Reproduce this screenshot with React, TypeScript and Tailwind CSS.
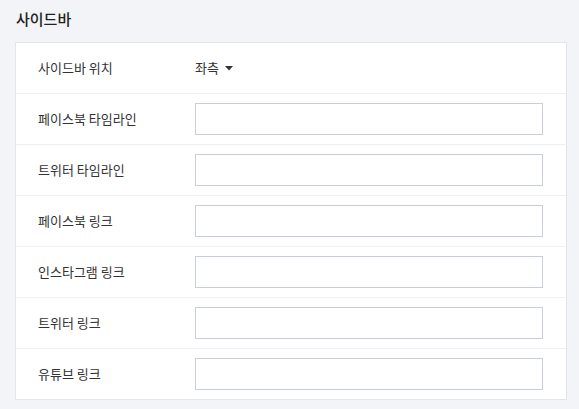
const font = { fontFamily: '"Noto Sans CJK KR", "Noto Sans", sans-serif' };

const rows = ['페이스북 타임라인', '트위터 타임라인', '페이스북 링크', '인스타그램 링크', '트위터 링크', '유튜브 링크'];

export default function App() {
  return (
    <div className="w-[579px] h-[409px] bg-[#f3f4f7] pl-[15px] pt-[8px] text-[#333]" style={font}>
      <h2 className="text-[15px] leading-[22px] font-medium text-[#222] mb-[12px] pl-[1px]">사이드바</h2>
      <div className="w-[552px] bg-white border border-[#e2e5eb]">
        <div className="h-[51px] flex items-center border-b border-[#eef0f3] pl-[22px] text-[13px]">
          <div className="w-[157px]">사이드바 위치</div>
          <div className="flex items-center gap-[6px] text-[#333]">
            좌측
            <svg width="8" height="5" viewBox="0 0 8 5">
              <path d="M0 0 L8 0 L4 4.5 Z" fill="#333" />
            </svg>
          </div>
        </div>
        {rows.map((label, i) => (
          <div
            key={label}
            className={`flex items-center pl-[22px] text-[13px] ${i < rows.length - 1 ? 'h-[51px] border-b border-[#eef0f3]' : 'h-[50px]'}`}
          >
            <div className="w-[157px]">{label}</div>
            <input type="text" className="w-[348px] h-[32px] border border-[#c8cfd8] bg-white outline-none px-2" />
          </div>
        ))}
      </div>
    </div>
  );
}
